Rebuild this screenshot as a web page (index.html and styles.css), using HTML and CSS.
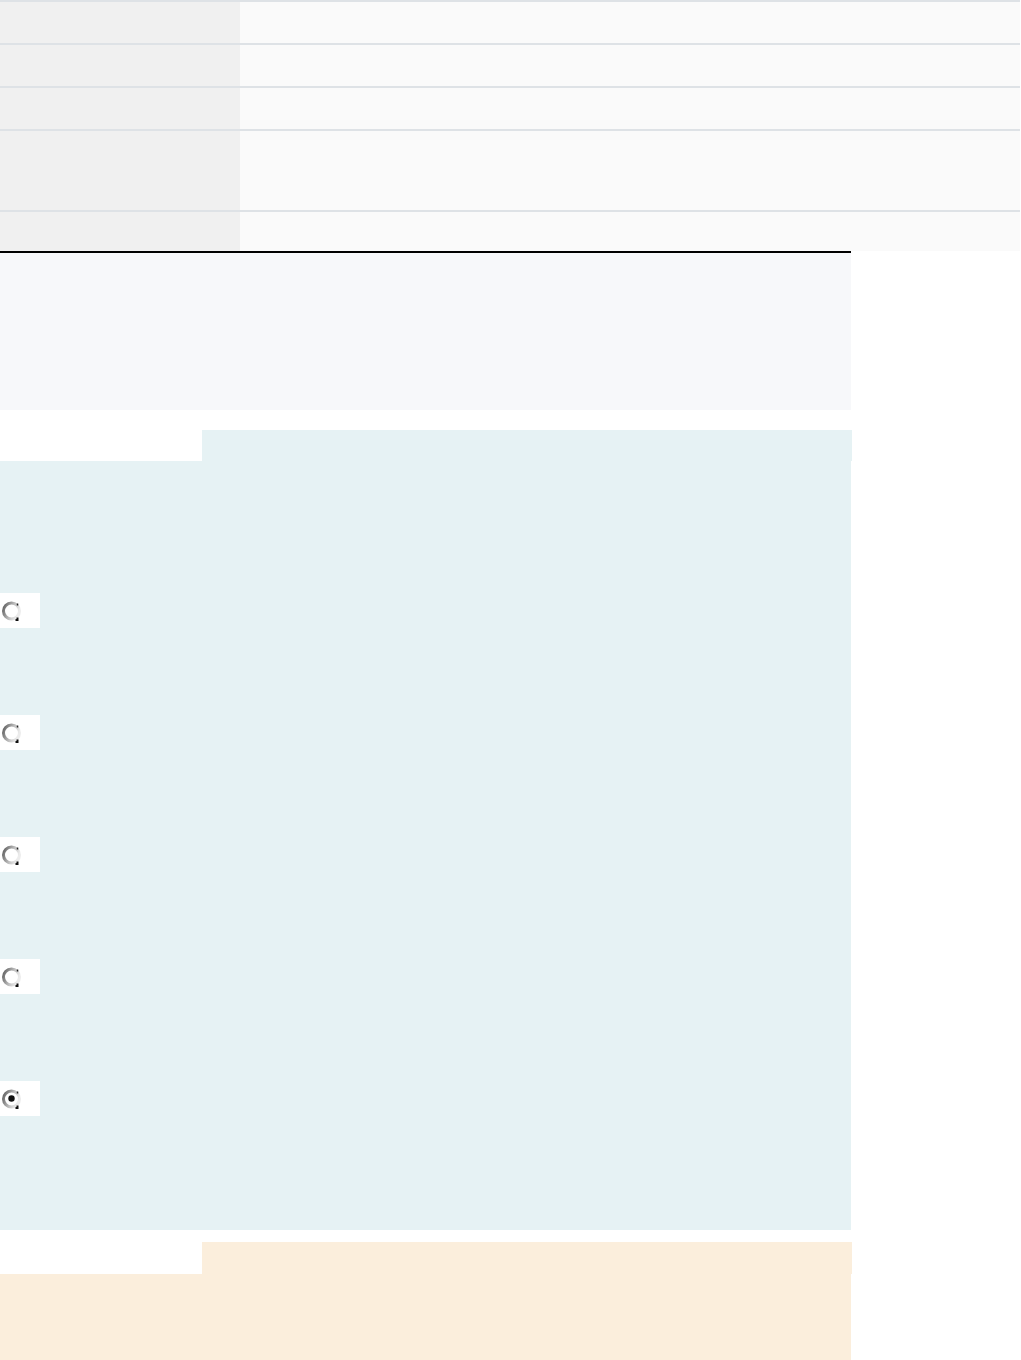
FILE: index.html
```html
<html>
    <head>
        <link rel="stylesheet" href="styles.css">
    </head>
    <body>
        <div class="specs">
            <div class="spec-row"><div class="spec-key"></div><div class="spec-val"></div></div>
            <div class="spec-row"><div class="spec-key"></div><div class="spec-val"></div></div>
            <div class="spec-row"><div class="spec-key"></div><div class="spec-val"></div></div>
            <div class="spec-row tall"><div class="spec-key"></div><div class="spec-val"></div></div>
            <div class="spec-row last"><div class="spec-key"></div><div class="spec-val"></div></div>
        </div>

        <div class="summary"></div>

        <div class="panel panel-blue">
            <div class="panel-tab"></div>
            <div class="panel-body">
                <div class="options">
                    <label class="option"><span class="radio"><svg width="21" height="22" viewBox="0 0 21 22"><defs><linearGradient id="rg" x1="0" y1="0" x2="1" y2="0.4"><stop offset="0" stop-color="#5c5c5c"/><stop offset="0.6" stop-color="#bdbdbd"/><stop offset="1" stop-color="#ececec"/></linearGradient></defs><circle cx="10.5" cy="11" r="8" fill="#fff" stroke="url(#rg)" stroke-width="3"/><path d="M16.5 3.5 L16.5 5.5" stroke="#222" stroke-width="1.5"/><path d="M14.5 20 L16.5 20 L16.5 17.5" stroke="#111" stroke-width="2" fill="none"/></svg></span></label>
                    <label class="option"><span class="radio"><svg width="21" height="22" viewBox="0 0 21 22"><circle cx="10.5" cy="11" r="8" fill="#fff" stroke="url(#rg)" stroke-width="3"/><path d="M16.5 3.5 L16.5 5.5" stroke="#222" stroke-width="1.5"/><path d="M14.5 20 L16.5 20 L16.5 17.5" stroke="#111" stroke-width="2" fill="none"/></svg></span></label>
                    <label class="option"><span class="radio"><svg width="21" height="22" viewBox="0 0 21 22"><circle cx="10.5" cy="11" r="8" fill="#fff" stroke="url(#rg)" stroke-width="3"/><path d="M16.5 3.5 L16.5 5.5" stroke="#222" stroke-width="1.5"/><path d="M14.5 20 L16.5 20 L16.5 17.5" stroke="#111" stroke-width="2" fill="none"/></svg></span></label>
                    <label class="option"><span class="radio"><svg width="21" height="22" viewBox="0 0 21 22"><circle cx="10.5" cy="11" r="8" fill="#fff" stroke="url(#rg)" stroke-width="3"/><path d="M16.5 3.5 L16.5 5.5" stroke="#222" stroke-width="1.5"/><path d="M14.5 20 L16.5 20 L16.5 17.5" stroke="#111" stroke-width="2" fill="none"/></svg></span></label>
                    <label class="option"><span class="radio"><svg width="21" height="22" viewBox="0 0 21 22"><circle cx="10.5" cy="11" r="8" fill="#fff" stroke="url(#rg)" stroke-width="3"/><circle cx="10.5" cy="10.5" r="3.2" fill="#111"/><path d="M16.5 3.5 L16.5 5.5" stroke="#222" stroke-width="1.5"/><path d="M14.5 20 L16.5 20 L16.5 17.5" stroke="#111" stroke-width="2" fill="none"/></svg></span></label>
                </div>
            </div>
        </div>

        <div class="panel panel-orange">
            <div class="panel-tab"></div>
            <div class="panel-body"></div>
        </div>
    </body>
</html>
```

FILE: styles.css
```css
body {
    margin: 0;
    background: #ffffff;
    font-family: "Liberation Sans", Arial, sans-serif;
}

.specs {
    width: 1020px;
}

.spec-row {
    display: grid;
    grid-template-columns: 240px 1fr;
    height: 41px;
    border-top: 2px solid #dee2e6;
}
.spec-row.tall {
    height: 79px;
}
.spec-row.last {
    height: 39px;
}
.spec-key {
    background: #f0f0f0;
}
.spec-val {
    background: #fafafa;
}

.summary {
    width: 851px;
    height: 157px;
    border-top: 2px solid #000;
    background: #f7f8fa;
    margin-bottom: 20px;
}

.panel {
    width: 852px;
}
.panel-tab {
    margin-left: 202px;
    height: 31px;
}
.panel-body {
    width: 851px;
}

.panel-blue .panel-tab,
.panel-blue .panel-body {
    background: #e6f2f4;
}
.panel-blue .panel-body {
    height: 769px;
}

.options {
    display: flex;
    flex-direction: column;
    gap: 87px;
    padding-top: 132px;
}
.option {
    display: flex;
    align-items: center;
    width: 40px;
    height: 35px;
    background: #fff;
}
.radio {
    display: block;
    width: 21px;
    height: 22px;
    margin-left: 1px;
    margin-top: 0;
}

.panel-orange {
    margin-top: 12px;
}
.panel-orange .panel-tab {
    height: 32px;
}
.panel-orange .panel-tab,
.panel-orange .panel-body {
    background: #fbeedc;
}
.panel-orange .panel-body {
    height: 120px;
}
```
